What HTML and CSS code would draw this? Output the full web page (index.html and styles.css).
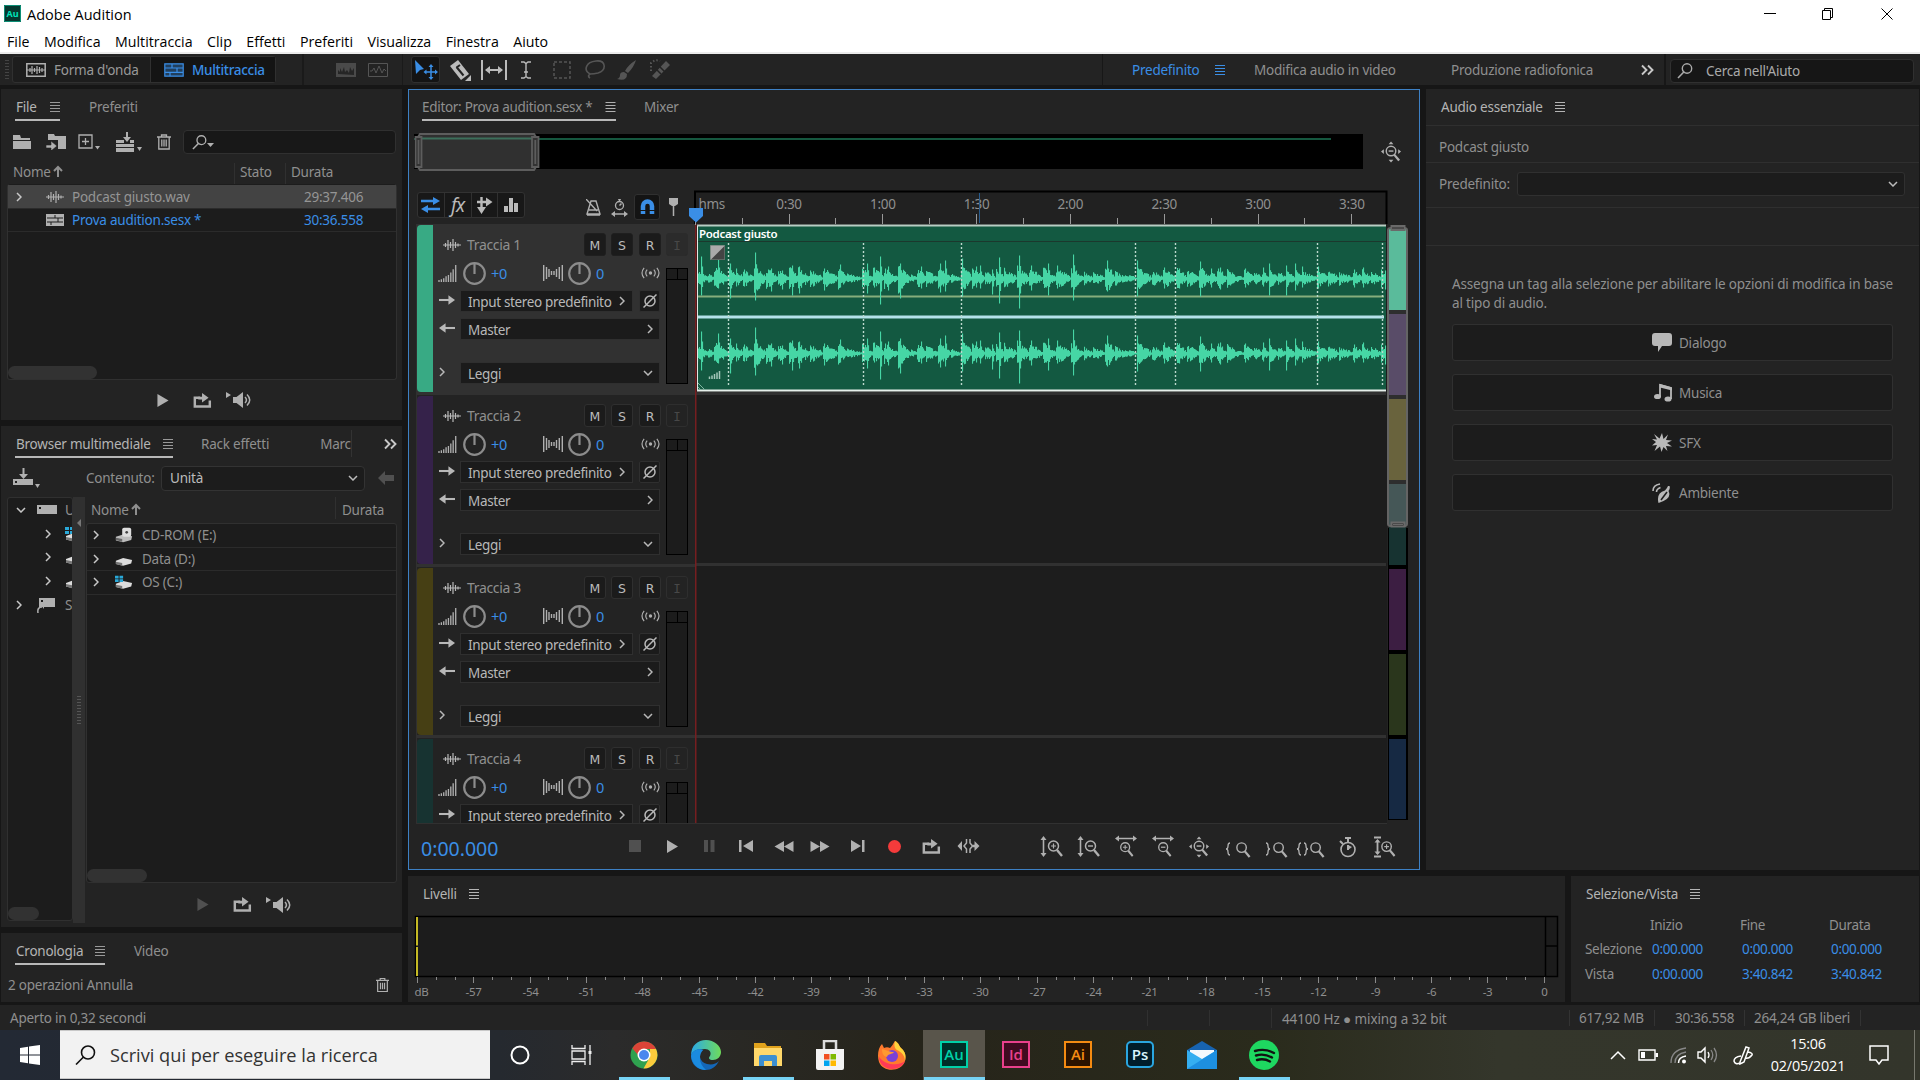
FILE: index.html
```html
<!DOCTYPE html>
<html lang="it">
<head>
<meta charset="utf-8">
<title>Adobe Audition</title>
<link rel="stylesheet" href="styles.css">
</head>
<body>
<svg class="defs" aria-hidden="true">
  <defs>
    <symbol id="menu" viewBox="0 0 10 10"><path d="M0 .5h10M0 3.5h10M0 6.5h10M0 9.5h10" stroke="currentColor"/></symbol>
    <symbol id="chev-r" viewBox="0 0 6 10"><path d="M1 1l4 4-4 4" fill="none" stroke="currentColor" stroke-width="1.5"/></symbol>
    <symbol id="chev-d" viewBox="0 0 10 6"><path d="M1 1l4 4 4-4" fill="none" stroke="currentColor" stroke-width="1.5"/></symbol>
    <symbol id="more" viewBox="0 0 14 12"><path d="M1 1.500l4.500 4.500L1 10.500M7 1.500l4.500 4.500L7 10.500" fill="none" stroke="currentColor" stroke-width="1.900"/></symbol>
    <symbol id="up" viewBox="0 0 10 12"><path d="M5 12V2M1 6l4-4 4 4" fill="none" stroke="currentColor" stroke-width="2"/></symbol>
    <symbol id="lens" viewBox="0 0 16 16"><circle cx="10" cy="5.5" r="4.7" fill="none" stroke="currentColor" stroke-width="1.4"/><path d="M6.8 9L1 15" stroke="currentColor" stroke-width="1.6"/></symbol>
    <symbol id="wave" viewBox="0 0 18 12"><path d="M0 6h18M2.5 4v4M5 1v10M7.5 3v6M10 0v12M12.500 3v6M15 4.500v3" stroke="currentColor" stroke-width="1.2"/></symbol>
    <symbol id="wavebox" viewBox="0 0 20 14"><path d="M.8.8h18.400v12.400H.8z" fill="none" stroke="currentColor" stroke-width="1.5"/><path d="M1 7h18M4 5v4M6 3v8M8.500 5v4M11 3v8M13.500 4v6M16 5v4" stroke="currentColor" stroke-width="1.2"/></symbol>
    <symbol id="multi" viewBox="0 0 20 14"><path d="M.8.8h18.400v12.400H.8zM1 5h18M1 9.300h18M8 1v4M13 5v4M6 9v4" fill="currentColor" fill-opacity=".35" stroke="currentColor" stroke-width="1.2"/></symbol>
    <symbol id="sess" viewBox="0 0 18 12"><path d="M0 0h18v12H0z" fill="currentColor"/><path d="M1 4h16M1 8h16M9 1v3M5 8v3M12 4v4" stroke="#1c1c1c"/></symbol>
    <symbol id="trash" viewBox="0 0 14 16"><path d="M0 3h14M4.500 3V1h5v2M1.800 3v12h10.400V3M4.800 5.500v7M7 5.500v7M9.200 5.500v7" fill="none" stroke="currentColor" stroke-width="1.3"/></symbol>
    <symbol id="play" viewBox="0 0 12 14"><path d="M0 0l12 7-12 7z" fill="currentColor"/></symbol>
    <symbol id="loop" viewBox="0 0 19 16"><path d="M7 5H1.300v9.400h16V8" fill="none" stroke="currentColor" stroke-width="2.600"/><path d="M9 0l7 5-7 5V7H5V4h4z" fill="currentColor"/></symbol>
    <symbol id="speak" viewBox="0 0 26 18"><path d="M0 1l5 3-5 3zM7 6h3.500L17 1v16l-6.500-5H7z" fill="currentColor"/><path d="M19 6q3 3 0 6M21 3.500q5.500 5.500 0 11" fill="none" stroke="currentColor" stroke-width="1.500"/></symbol>
    <symbol id="drive" viewBox="0 0 20 9"><path fill="currentColor" fill-rule="evenodd" d="M0 0h20v9H0zM2 2v2h2V2z"/></symbol>
    <symbol id="disk" viewBox="0 0 20 16"><path d="M1 10l8-3 10 2-1 4-9 2.500-8-2z" fill="#ddd"/><path d="M1 11l7 1.500v3L1 13.500z" fill="#777"/></symbol>
    <symbol id="cd" viewBox="0 0 20 16"><path d="M1 10l8-2.500 10 2-1 4-9 2.500-8-2z" fill="#bbb"/><path d="M1 11l7 1.500v3L1 13.500z" fill="#666"/><rect x="8" width="10" height="10" rx="2" fill="#ddd"/><circle cx="13" cy="5" r="1.500" fill="#444"/></symbol>
    <symbol id="osdisk" viewBox="0 0 20 16"><use href="#disk"/><path d="M0 1h4v3H0zM5 1h4v3H5zM0 5h4v3H0zM5 5h4v3H5z" fill="#29a8d8"/></symbol>
    <symbol id="mag" viewBox="0 0 16 18"><circle cx="6.500" cy="7" r="5" fill="none" stroke="currentColor" stroke-width="1.500"/><path d="M10 11l5 6" stroke="currentColor" stroke-width="2.400"/></symbol>
    <symbol id="zin" viewBox="0 0 16 18"><use href="#mag"/><path d="M4 7h5M6.500 4.500v5" stroke="currentColor" stroke-width="1.200"/></symbol>
    <symbol id="zout" viewBox="0 0 16 18"><use href="#mag"/><path d="M4 7h5" stroke="currentColor" stroke-width="1.400"/></symbol>
    <symbol id="zoomfull" viewBox="0 0 22 22"><circle cx="10.500" cy="10" r="5" fill="none" stroke="currentColor" stroke-width="1.500"/><path d="M8 10h5" stroke="currentColor" stroke-width="1.500"/><path d="M14 14l5 6" stroke="currentColor" stroke-width="2.400"/><path d="M10.500 0l2.500 3H8zM10.500 22l2.500-3H8zM0 10.500L3 8v5zM21 10.500L18 8v5z" fill="currentColor"/></symbol>
    <symbol id="a-right" viewBox="0 0 17 10"><path d="M0 5h11" stroke="currentColor" stroke-width="2.200"/><path d="M10 0l7 5-7 5z" fill="currentColor"/></symbol>
    <symbol id="a-left" viewBox="0 0 17 10"><path d="M6 5h11" stroke="currentColor" stroke-width="2.200"/><path d="M7 0L0 5l7 5z" fill="currentColor"/></symbol>
    <symbol id="bars" viewBox="0 0 20 18"><path d="M1 18v-2M3.500 18v-3M6 18v-4M8.500 18v-6M11 18v-7.500M13.500 18V8M16 18V4.500M18.700 18V0" stroke="currentColor" stroke-width="1.400"/></symbol>
    <symbol id="pan" viewBox="0 0 20 16"><path d="M.7 0v16M3.500 2v12M6 4v8M8.500 6v4M11 6v4M13.500 4v8M16.300 2v12M19.300 0v16" stroke="currentColor" stroke-width="1.400"/></symbol>
    <symbol id="knob" viewBox="0 0 23 23"><circle cx="11.500" cy="11.500" r="10.300" fill="none" stroke="#8c8c8c" stroke-width="2.200"/><path d="M11.500 2v10" stroke="#8c8c8c" stroke-width="2.200"/></symbol>
    <symbol id="monitor" viewBox="0 0 20 12"><circle cx="10" cy="6" r="1.800" fill="currentColor"/><path d="M6.500 2.500q-3 3.500 0 7M13.500 2.500q3 3.500 0 7M3.300 .5q-4.500 5.500 0 11M16.700 .5q4.500 5.500 0 11" fill="none" stroke="currentColor" stroke-width="1.200"/></symbol>
    <symbol id="phase" viewBox="0 0 14 14"><circle cx="7" cy="7" r="5" fill="none" stroke="currentColor" stroke-width="1.500"/><path d="M.5 13.500l13-13" stroke="currentColor" stroke-width="1.500"/></symbol>
  </defs>
</svg>

<header class="titlebar">
  <div class="caption">
    <svg class="app-ico" width="17" height="17" viewBox="0 0 17 17"><rect width="17" height="17" fill="#06382f"/><path d="M.5.5h16v16H.5z" fill="none" stroke="#0c8e76"/><text x="8.500" y="11.500" text-anchor="middle" font-size="9" font-weight="700" fill="#00e4bb">Au</text></svg>
    <span>Adobe Audition</span>
    <svg class="win-ctl" width="130" height="14" viewBox="0 0 130 14" fill="none" stroke="#000"><path d="M0 6.500h12M58.500 3.500h8v9h-8zM60.500 3V1.500h8v9h-2M117.500 1.500l11 11M128.500 1.500l-11 11"/></svg>
  </div>
  <nav class="menubar"><span>File</span><span>Modifica</span><span>Multitraccia</span><span>Clip</span><span>Effetti</span><span>Preferiti</span><span>Visualizza</span><span>Finestra</span><span>Aiuto</span></nav>
</header>

<div class="toolbar">
  <div class="grip"></div>
  <div class="modes">
    <div class="mode"><svg width="20" height="14"><use href="#wavebox"/></svg>Forma d'onda</div>
    <div class="mode on"><svg width="20" height="14"><use href="#multi"/></svg>Multitraccia</div>
  </div>
  <div class="dim-pair">
    <svg width="20" height="14" viewBox="0 0 20 14"><path d="M0 0h20v14H0z" fill="#4a4a4a"/><path d="M2 11V7l2 2V5l2 4 2-5 1 5 2-2 2 3 1-6 2 4 2-3v7z" fill="#262626"/></svg>
    <svg width="20" height="14" viewBox="0 0 20 14" fill="none" stroke="#555"><path d="M.5.5h19v13H.5zM2 8h2l2-3 2 5 3-7 3 7 2-4 2 2"/></svg>
  </div>
  <div class="tools">
    <div class="tool on"><svg width="24" height="22" viewBox="0 0 24 22"><path d="M1 1l9 9-4 1-4 4z" fill="#3a8ee6"/><path d="M17 7v12M11 13h12" stroke="#3a8ee6" stroke-width="1.500"/><path d="M17 5l2.500 3h-5zM17 21l2.500-3h-5zM9.500 13l3-2.500v5zM24 13l-3-2.500v5z" fill="#3a8ee6"/></svg></div>
    <svg width="24" height="22" viewBox="0 0 24 22"><path d="M1 7l8-6 11 14-8 6z" fill="#bbb"/><path d="M7.500 8l7 8.500M7.500 8.500l3.500-2.500" stroke="#232323" stroke-width="2"/><path d="M22 16v6h-6z" fill="#bbb"/></svg>
    <svg width="26" height="20" viewBox="0 0 26 20"><path d="M1 0v20M25 0v20M5 10h16" stroke="#bbb" stroke-width="2"/><path d="M4 10l5-4v8zM22 10l-5-4v8z" fill="#bbb"/></svg>
    <svg class="g0" width="12" height="18" viewBox="0 0 12 18"><path d="M1 1h3l2 1.500L8 1h3M1 17h3l2-1.500L8 17h3M6 2v14M4 11h4" fill="none" stroke="#bbb" stroke-width="1.400"/></svg>
    <svg class="g1" width="18" height="18" viewBox="0 0 18 18"><path d="M1 1h16v16H1z" fill="none" stroke="#555" stroke-width="1.500" stroke-dasharray="3 2"/></svg>
    <svg class="g2" width="21" height="19" viewBox="0 0 21 19"><path d="M5 14C-2 10 1 2 11 1s11 9 2 12c-4 1-6 1-8 1zm0 0q-3 2 0 4" fill="none" stroke="#555" stroke-width="1.600"/></svg>
    <svg class="g3" width="20" height="20" viewBox="0 0 20 20"><path d="M19 0Q11 5 8 11l3 2q6-6 8-13zM7 12q-4 0-4 3t-3 4q10 3 10-5z" fill="#555"/></svg>
    <svg class="g4" width="22" height="21" viewBox="0 0 22 21"><path d="M2 17L16 2l4 4L6 20z" fill="#555"/><path d="M9 7l6 6M7 11l4 4" stroke="#232323" stroke-width="1.500"/><path d="M1 12V4q4-4 9-2" fill="none" stroke="#555" stroke-dasharray="1.500 2" stroke-width="2"/></svg>
  </div>
  <div class="spaces">
    <span class="blue w1">Predefinito</span><svg class="blue" width="10" height="10"><use href="#menu"/></svg>
    <span class="w2">Modifica audio in video</span><span class="w3">Produzione radiofonica</span>
    <svg class="lite" width="14" height="12"><use href="#more"/></svg>
  </div>
  <div class="help"><svg width="16" height="16"><use href="#lens"/></svg>Cerca nell'Aiuto</div>
</div>

<main class="workspace">
  <div class="left">
    <section class="panel">
      <div class="tabs"><div class="tab on t45">File<svg width="10" height="10"><use href="#menu"/></svg></div><span class="tab2 m29">Preferiti</span></div>
      <div class="filebar">
        <svg width="18" height="14" viewBox="0 0 18 14"><path d="M0 0h7l1 3h9v2H0zM0 6h18v8H0z" fill="#b0b0b0"/></svg>
        <svg width="20" height="16" viewBox="0 0 20 16"><path d="M2 0h6l1 2h11v13h-8V6H2z" fill="#b0b0b0"/><path d="M0 11h5V7l6 5-6 5v-3H0z" fill="#b0b0b0" stroke="#232323" stroke-width=".6"/></svg>
        <svg width="22" height="16" viewBox="0 0 22 16"><path d="M1 1h13v13H1zM4 7.500h7M7.500 4v7" fill="none" stroke="#b0b0b0" stroke-width="1.300"/><path d="M17 12h5l-2.500 3.500z" fill="#b0b0b0"/></svg>
        <svg width="26" height="20" viewBox="0 0 26 20"><path d="M0 8h8v3H0zM14 8h4v3h-4zM0 12h18v3H0zM0 16h18v4H0z" fill="#b0b0b0"/><path d="M11 0v6" stroke="#b0b0b0" stroke-width="2"/><path d="M7 5h8l-4 5zM21 15h5l-2.500 4z" fill="#b0b0b0"/></svg>
        <svg width="14" height="16" class="ic"><use href="#trash"/></svg>
        <div class="search"><svg width="15" height="15" class="ic"><use href="#lens"/></svg><svg width="7" height="4" viewBox="0 0 7 4"><path d="M0 0h7L3.500 4z" fill="#b0b0b0"/></svg></div>
      </div>
      <div class="filehead"><span>Nome <svg width="10" height="12"><use href="#up"/></svg></span><span>Stato</span><span>Durata</span></div>
      <div class="filebox">
        <div class="frow sel"><svg width="6" height="10" class="lite"><use href="#chev-r"/></svg><svg width="18" height="12" class="ic"><use href="#wave"/></svg><span>Podcast giusto.wav</span><span>29:37.406</span></div>
        <div class="frow blue"><i></i><svg width="18" height="12" class="ic"><use href="#sess"/></svg><span>Prova audition.sesx *</span><span>30:36.558</span></div>
        <div class="thumb w89"></div>
      </div>
      <div class="mini"><svg width="12" height="13"><use href="#play"/></svg><svg width="19" height="15"><use href="#loop"/></svg><svg width="26" height="18"><use href="#speak"/></svg></div>
    </section>

    <section class="panel">
      <div class="tabs"><div class="tab on t158">Browser multimediale<svg width="10" height="10"><use href="#menu"/></svg></div><span class="tab2 m28">Rack effetti</span><span class="tab2 cut">Marca</span><svg class="lite far" width="14" height="12"><use href="#more"/></svg></div>
      <div class="mbar">
        <svg width="28" height="20" viewBox="0 0 28 20"><path d="M0 11h20v6H0z" fill="#b0b0b0"/><path d="M2 13h2v2H2z" fill="#232323"/><path d="M10.500 0v8" stroke="#b0b0b0" stroke-width="2"/><path d="M6 6h9l-4.500 5zM22 16h5l-2.500 4z" fill="#b0b0b0"/></svg>
        <span>Contenuto:</span><div class="select">Unità<svg width="10" height="6"><use href="#chev-d"/></svg></div>
        <svg width="16" height="14" viewBox="0 0 16 14"><path d="M7 0v4h9v6H7v4L0 7z" fill="#505050"/></svg>
      </div>
      <div class="mbody">
        <div class="tree">
          <div class="trow"><svg width="10" height="6" class="lite"><use href="#chev-d"/></svg><svg width="20" height="9" class="ic tc"><use href="#drive"/></svg><span>U</span></div>
          <div class="trow in"><svg width="6" height="10" class="lite"><use href="#chev-r"/></svg><svg width="20" height="16"><use href="#osdisk"/></svg></div>
          <div class="trow in"><svg width="6" height="10" class="lite"><use href="#chev-r"/></svg><svg width="20" height="16"><use href="#disk"/></svg></div>
          <div class="trow in"><svg width="6" height="10" class="lite"><use href="#chev-r"/></svg><svg width="20" height="16"><use href="#disk"/></svg></div>
          <div class="trow"><svg width="6" height="10" class="lite"><use href="#chev-r"/></svg><svg width="18" height="15" viewBox="0 0 18 15" class="tc"><path fill="#b0b0b0" fill-rule="evenodd" d="M2 0h16v9H2zM4 2v2h2V2z"/><path d="M1 15q-1-6 4-6" fill="none" stroke="#b0b0b0" stroke-width="1.500"/><path d="M3 6h4v5z" fill="#b0b0b0"/></svg><span>S</span></div>
          <div class="thumb w31"></div>
        </div>
        <div class="split"><svg width="4" height="8" viewBox="0 0 4 8"><path d="M4 0v8L0 4z" fill="#777"/></svg><b></b></div>
        <div class="mlist">
          <div class="mhead"><span>Nome <svg width="10" height="12"><use href="#up"/></svg></span><span>Durata</span></div>
          <div class="mbox">
            <div class="mrow"><svg width="6" height="10" class="lite"><use href="#chev-r"/></svg><svg width="18" height="16"><use href="#cd"/></svg>CD-ROM (E:)</div>
            <div class="mrow"><svg width="6" height="10" class="lite"><use href="#chev-r"/></svg><svg width="18" height="16"><use href="#disk"/></svg>Data (D:)</div>
            <div class="mrow"><svg width="6" height="10" class="lite"><use href="#chev-r"/></svg><svg width="18" height="16"><use href="#osdisk"/></svg>OS (C:)</div>
            <div class="thumb w60"></div>
          </div>
          <div class="mini second"><svg width="12" height="13"><use href="#play"/></svg><svg width="19" height="15"><use href="#loop"/></svg><svg width="26" height="18"><use href="#speak"/></svg></div>
        </div>
      </div>
    </section>

    <section class="panel">
      <div class="tabs"><div class="tab on t90">Cronologia<svg width="10" height="10"><use href="#menu"/></svg></div><span class="tab2 m29">Video</span></div>
      <div class="hist"><span>2 operazioni Annulla</span><svg width="13" height="16" class="ic"><use href="#trash"/></svg></div>
    </section>
  </div>

  <div class="right">
    <div class="upper">
      <section class="panel editor">
        <div class="tabs"><div class="tab t194">Editor: Prova audition.sesx *<svg width="11" height="10" class="ic"><use href="#menu"/></svg></div><span class="tab2 m28">Mixer</span></div>
        <div class="over">
          <div class="overview"><div class="clipline"></div>
            <svg class="range" width="126" height="38" viewBox="0 0 126 38"><path d="M5 2h115v34H5z" fill="#303030"/><path d="M4 5.500h118" stroke="#3c6f5b" stroke-width="2"/><path d="M4 4l2-3h114l2 3M4 34l2 3h114l2-3" fill="none" stroke="#5d5d5d" stroke-width="2"/><path d="M1.500 4h6v30h-6zM118 4h6.500v30H118zM4.500 7v24M121.300 7v24" fill="#333" stroke="#5d5d5d" stroke-width="1.800"/></svg>
          </div>
          <svg class="ic" width="21" height="22"><use href="#zoomfull"/></svg>
        </div>
        <div class="timeline">
          <div class="tracktools">
            <div class="group">
              <span class="cell"><svg width="19" height="16" viewBox="0 0 19 16"><path d="M0 4h13M6 12h13" stroke="#3a8ee6" stroke-width="2.400"/><path d="M12 0l7 4-7 4zM7 8l-7 4 7 4z" fill="#3a8ee6"/></svg></span>
              <span class="cell fx">fx</span>
              <span class="cell"><svg width="17" height="18" viewBox="0 0 17 18"><path d="M1 6h10M5.500 1v11" stroke="#bbb" stroke-width="2.400"/><path d="M10 1.500l6.500 4.500-6.500 4.500zM1 11h9l-4.500 7z" fill="#bbb"/></svg></span>
              <span class="cell"><svg width="14" height="14" viewBox="0 0 14 14"><path d="M0 8h4v6H0zM5 0h4v14H5zM10 5h4v9h-4z" fill="#bbb"/></svg></span>
            </div>
            <svg width="15" height="17" viewBox="0 0 15 17"><path d="M5 2h5l4 13H1zM3 11h9M0 0l11 12M1 16h13" fill="none" stroke="#b0b0b0" stroke-width="1.400"/></svg>
            <svg width="17" height="18" viewBox="0 0 17 18"><circle cx="8.500" cy="6.500" r="4" fill="none" stroke="#b0b0b0" stroke-width="1.300"/><path d="M7 0h3M8.500 0v3M8.500 6.500l2-2M2 15h13" stroke="#b0b0b0" stroke-width="1.500"/><path d="M0 15l4-3v6zM17 15l-4-3v6z" fill="#b0b0b0"/></svg>
            <span class="snap"><svg width="15" height="16" viewBox="0 0 15 16"><path d="M3 15V7a4.500 4.500 0 0 1 9 0v8" fill="none" stroke="#3a8ee6" stroke-width="4.500"/><path d="M0 11.500h6M9 11.500h6" stroke="#161616"/></svg></span>
            <svg width="9" height="18" viewBox="0 0 9 18"><path d="M0 0h9v6L6 8H3L0 6z" fill="#b0b0b0"/><path d="M4.500 8v10" stroke="#b0b0b0" stroke-width="1.500"/></svg>
          </div>
          <svg id="ruler" class="ruler" width="692" height="33" viewBox="695 191 692 33"></svg>
          <div></div>
          <div id="tracks" class="tracks"></div>
          <svg id="lanes" class="lanes" width="692" height="600" viewBox="695 224 692 600"></svg>
          <svg class="nav" width="32" height="600" viewBox="1387 224 32 600">
            <path d="M1388 528h20v292h-20z" fill="#000"/><path d="M1388 228h19v299h-19z" fill="#2e2e2e"/>
            <path d="M1389 229h17v81h-17z" fill="#5abb9b"/><path d="M1389 314h17v81h-17z" fill="#594c68"/><path d="M1389 399h17v81h-17z" fill="#69633d"/><path d="M1389 484h17v43h-17z" fill="#455757"/>
            <path d="M1389 527h17v38h-17z" fill="#173331"/><path d="M1389 569h17v81h-17z" fill="#3c1e42"/><path d="M1389 654h17v81h-17z" fill="#2a361c"/><path d="M1389 739h17v80h-17z" fill="#162943"/>
            <path d="M1388 230q0-2 3-2h13q3 0 3 2v294q0 2-3 2h-13q-3 0-3-2z" fill="none" stroke="#646464" stroke-width="2"/>
            <path d="M1391.500 226h13v4h-13zM1391.500 522.500h13v4h-13z" fill="#2a2a2a" stroke="#6a6a6a" stroke-width="2"/><path d="M1393 228h10M1393 524.500h10" stroke="#6a6a6a"/>
          </svg>
        </div>
        <div class="transport">
          <div class="clock">0:00.000</div>
          <svg width="780" height="36" viewBox="620 830 780 36" class="ic">
            <path d="M629 841h12v12h-12z" fill="#505050"/><path d="M667 841l11 6.500-11 6.500z" fill="currentColor"/><path d="M704 841h4v12h-4zM710.500 841h4v12h-4z" fill="#505050"/>
            <path d="M739 841h2.500v12H739zM753 841v12l-10-6z" fill="currentColor"/><path d="M784 842v11l-9.500-5.500zM793.500 842v11l-9.500-5.500z" fill="currentColor"/><path d="M810.500 842v11l9.500-5.500zM820 842v11l9.500-5.500z" fill="currentColor"/><path d="M862 841h2.500v12H862zM851 841v12l10-6z" fill="currentColor"/>
            <circle cx="894.500" cy="847.500" r="6.500" fill="#f43b3b"/>
            <svg x="922" y="840" width="19" height="15"><use href="#loop"/></svg>
            <path d="M966.500 840v4l-2.500 3 2.500 3v4M970 840v4l2.500 3-2.500 3v4" fill="none" stroke="currentColor" stroke-width="1.500"/><path d="M962 842v10l-4.500-5zM974.500 842v3.800h-2v2.400h2v3.800l5-5z" fill="currentColor"/>
            <svg x="1047" y="840" width="16" height="18"><use href="#zin"/></svg><svg x="1084" y="840" width="16" height="18"><use href="#zout"/></svg>
            <path d="M1043.500 840v15M1080.500 840v15" stroke="currentColor" stroke-width="1.600"/><path d="M1043.500 837l3 4h-6zM1043.500 858l3-4h-6zM1080.500 837l3 4h-6zM1080.500 858l3-4h-6z" fill="currentColor"/>
            <svg x="1119" y="842" width="15" height="16"><use href="#zin"/></svg><svg x="1157" y="842" width="15" height="16"><use href="#zout"/></svg>
            <path d="M1118 839.500h16M1155 839.500h16" stroke="currentColor" stroke-width="1.600"/><path d="M1115 839.500l4-3v6zM1137 839.500l-4-3v6zM1152 839.500l4-3v6zM1174 839.500l-4-3v6z" fill="currentColor"/>
            <svg x="1189" y="837" width="21" height="22"><use href="#zoomfull"/></svg>
            <svg x="1235" y="842" width="16" height="17"><use href="#mag"/></svg><svg x="1272" y="842" width="16" height="17"><use href="#mag"/></svg><svg x="1309" y="842" width="16" height="17"><use href="#mag"/></svg>
            <path d="M1230 844q-2 0-2 3t-2 3q2 0 2 3t2 3M1266 844q2 0 2 3t2 3q-2 0-2 3t-2 3M1301 844q-2 0-2 3t-2 3q2 0 2 3t2 3M1304 844q2 0 2 3t2 3q-2 0-2 3t-2 3" fill="none" stroke="currentColor" stroke-width="1.300"/>
            <circle cx="1348" cy="850.500" r="7" fill="none" stroke="currentColor" stroke-width="1.600"/><path d="M1345 839h6M1348 839v5M1348 851v-5M1340 842l3 3" stroke="currentColor" stroke-width="2"/><path d="M1348 851v-5l4 2z" fill="currentColor"/>
            <svg x="1380" y="841" width="16" height="17"><use href="#zin"/></svg><path d="M1374 838.500h7M1374 857.500h7M1377.500 841v14" stroke="currentColor" stroke-width="1.800"/><path d="M1377.500 840l3 3.500h-6zM1377.500 856l3-3.500h-6z" fill="currentColor"/>
          </svg>
        </div>
      </section>

      <section class="panel essential">
        <div class="tabs line"><div class="tab bare">Audio essenziale<svg width="10" height="10"><use href="#menu"/></svg></div></div>
        <div class="cliprow">Podcast giusto</div>
        <div class="preset"><span>Predefinito:</span><div class="drop"><svg width="10" height="6"><use href="#chev-d"/></svg></div></div>
        <div class="blank"></div>
        <div class="assign">
          <p>Assegna un tag alla selezione per abilitare le opzioni di modifica in base al tipo di audio.</p>
          <div class="tag"><svg width="20" height="19" viewBox="0 0 20 19"><path d="M3 0h14q3 0 3 3v7q0 3-3 3h-7l-4 6v-6H3q-3 0-3-3V3q0-3 3-3z" fill="#b8b8b8"/></svg>Dialogo</div>
          <div class="tag"><svg width="20" height="19" viewBox="0 0 20 19"><path d="M8 14V2l11 3v11" fill="none" stroke="#b8b8b8" stroke-width="1.800"/><path d="M8 1l12 3.500v3L8 4.500z" fill="#b8b8b8"/><ellipse cx="5.500" cy="13.500" rx="3.500" ry="2.600" fill="#b8b8b8"/><ellipse cx="16" cy="16" rx="3.500" ry="2.600" fill="#b8b8b8"/></svg>Musica</div>
          <div class="tag"><svg width="20" height="19" viewBox="0 0 20 19"><path d="M10 0l1.500 6L16 1.500l-2 5.500 6 .5-5 2.500 5 3.500-6-.5 1.500 5-4-4L9.500 19 8 13.500 2.500 18l2.500-6-5 .5L4 9 0 6l5 .5L2 1l5.500 4.500z" fill="#b8b8b8"/></svg>SFX</div>
          <div class="tag"><svg width="20" height="20" viewBox="0 0 20 20"><path d="M17.500 3q1 2-1 5 4 8-10 12Q4 10 13 7.500q2-2 3-4.500z" fill="#b8b8b8"/><path d="M9 17l6-8" stroke="#1c1c1c" stroke-width="1.500"/><path d="M1 8q0-6 7-7M4.500 9q0-3 4-4.500" fill="none" stroke="#b8b8b8" stroke-width="1.600"/></svg>Ambiente</div>
        </div>
      </section>
    </div>

    <div class="lower">
      <section class="panel">
        <div class="tabs"><div class="tab bare lv">Livelli<svg width="10" height="10"><use href="#menu"/></svg></div></div>
        <svg id="levels" class="levels" width="1157" height="94" viewBox="408 908 1157 94"></svg>
      </section>
      <section class="panel">
        <div class="tabs"><div class="tab bare sv">Selezione/Vista<svg width="10" height="10"><use href="#menu"/></svg></div></div>
        <div class="selgrid">
          <span></span><em>Inizio</em><em>Fine</em><em>Durata</em>
          <span>Selezione</span><b>0:00.000</b><b>0:00.000</b><b>0:00.000</b>
          <span>Vista</span><b>0:00.000</b><b>3:40.842</b><b>3:40.842</b>
        </div>
      </section>
    </div>
  </div>
</main>

<footer class="status">
  <span class="s0">Aperto in 0,32 secondi</span><span class="sep a"></span><span class="sep b"></span><span class="s1">44100 Hz ● mixing a 32 bit</span>
  <span class="s2">617,92 MB</span><span class="s3">30:36.558</span><span class="s4">264,24 GB liberi</span>
</footer>

<div class="taskbar">
  <div class="start"><svg width="20" height="20" viewBox="0 0 20 20"><path d="M0 3l8-1.200V9.500H0zM9 1.600L20 0v9.500H9zM0 10.500h8v7.800L0 17zM9 10.500h11V20L9 18.400z" fill="#fff"/></svg></div>
  <div class="winsearch"><svg width="21" height="20" viewBox="0 0 21 20"><circle cx="13" cy="7.500" r="6.500" fill="none" stroke="#111" stroke-width="1.600"/><path d="M8.500 12L1 19.500" stroke="#111" stroke-width="1.600"/></svg>Scrivi qui per eseguire la ricerca</div>
  <div class="apps">
    <div class="app"><svg width="22" height="22" viewBox="0 0 22 22"><circle cx="11" cy="11" r="8.500" fill="none" stroke="#fff" stroke-width="2"/></svg></div>
    <div class="app"><svg width="22" height="20" viewBox="0 0 22 20" fill="none" stroke="#eee" stroke-width="1.300"><path d="M1 0v3.500h13V0M1 20v-3.500h13V20M1 6h13v8H1zM19 0v20"/><path d="M17.500 7.500h3" stroke-width="3"/></svg></div>
    <div class="app run"><svg width="28" height="28" viewBox="0 0 28 28"><circle cx="14" cy="14" r="13.500" fill="#2fa14f"/><path d="M2.300 7.300A13.500 13.500 0 0 1 26 8H14l-6 6z" fill="#db4437"/><path d="M26 8a13.500 13.500 0 0 1-12.500 19.500L20 16V8z" fill="#fbcb3c"/><circle cx="14" cy="14" r="6.500" fill="#fff"/><circle cx="14" cy="14" r="5" fill="#4a87ee"/></svg></div>
    <div class="app"><svg width="30" height="30" viewBox="0 0 30 30"><defs><linearGradient id="eg"><stop offset="0" stop-color="#2aa8e8"/><stop offset="1" stop-color="#6fdc5a"/></linearGradient></defs><path d="M0 16C0 5 7 0 15 0s15 6 15 12c0 5-4 8-8 8-4 0-5-2-3-4 2-4-1-7-5-7C8 9 1 12 0 16z" fill="url(#eg)"/><path d="M0 16C1 10 8 8 12 10c-5 3-4 12 4 14 5 1 9 0 12-3-3 6-8 9-13 9C6 30 0 24 0 16z" fill="#1467b8"/><path d="M12 10c-4 4-5 13 3 20C7 30 1 24 0 16c1-5 8-8 12-6z" fill="#1b8be0"/></svg></div>
    <div class="app run"><svg width="28" height="24" viewBox="0 0 28 24"><path d="M0 0h11l2 3h14v20H0z" fill="#e0a21c"/><path d="M0 5h28v18H0z" fill="#ffd86b"/><path d="M5 23v-9q0-2 2-2h14q2 0 2 2v9h-5v-5h-8v5z" fill="#3d8fd1"/></svg></div>
    <div class="app"><svg width="28" height="30" viewBox="0 0 28 30"><path d="M8 9V1h12v8" fill="none" stroke="#ddd" stroke-width="2.500"/><path d="M0 9h28v19q0 2-2 2H2q-2 0-2-2z" fill="#f3f3f3"/><path d="M8 14h5.500v5.500H8z" fill="#f25022"/><path d="M14.500 14H20v5.500h-5.500z" fill="#7fba00"/><path d="M8 20.500h5.500V26H8z" fill="#00a4ef"/><path d="M14.500 20.500H20V26h-5.500z" fill="#ffb900"/></svg></div>
    <div class="app"><svg width="30" height="30" viewBox="0 0 30 30"><path d="M18 1c4 2 4 5 6 7 5 4 5 9 4 13-3 11-22 12-26 1C0 16 1 8 5 4l2 4c2-1 4-1 6 0 2-2 3-4 5-7z" fill="#ff7a2e"/><path d="M18 1c4 2 4 5 6 7 5 4 5 9 4 13 0-6-4-9-8-11-3-2-3-6-2-9z" fill="#ffd43c"/><path d="M2 17c0 8 7 12 13 12s11-3 13-8c-4 4-18 6-26-4z" fill="#ff3a57"/><circle cx="15" cy="16" r="6" fill="#7b41d6"/><path d="M5 9c5 1 7 3 12 3-2 3-6 1-7 5-4-1-5-4-5-8z" fill="#ff9a30"/></svg></div>
    <div class="app active"><div class="adobe au">Au</div></div>
    <div class="app"><div class="adobe id">Id</div></div>
    <div class="app"><div class="adobe ai">Ai</div></div>
    <div class="app"><div class="adobe ps">Ps</div></div>
    <div class="app"><svg width="30" height="28" viewBox="0 0 30 28"><path d="M0 9L15 0l15 9v4H0z" fill="#1763b0"/><path d="M3 9h24v9H3z" fill="#f4f9fd"/><path d="M0 9l15 9L30 9v19H0z" fill="#35aef0"/><path d="M0 28l30-19v19z" fill="#1d8fe0"/></svg></div>
    <div class="app run"><svg width="30" height="30" viewBox="0 0 30 30"><circle cx="15" cy="15" r="15" fill="#1ed760"/><path d="M6 11q10-3 19 2M7 15.500q8-2.500 16 2M8 20q7-2 13 1.500" fill="none" stroke="#111" stroke-width="2.400" stroke-linecap="round"/></svg></div>
  </div>
  <div class="tray">
    <svg width="16" height="10" viewBox="0 0 16 10"><path d="M1 9l7-7 7 7" fill="none" stroke="#fff" stroke-width="1.500"/></svg>
    <svg width="20" height="12" viewBox="0 0 20 12"><path d="M1 1h16v10H1z" fill="none" stroke="#fff" stroke-width="1.400"/><path d="M3 3h4v6H3zM17.500 4H20v4h-2.500z" fill="#fff"/></svg>
    <svg width="17" height="17" viewBox="0 0 17 17" fill="none"><path d="M1 16Q1 3 16 1M5 16Q5 7 16 5" stroke="#888" stroke-width="1.300"/><path d="M8.500 16q0-6 7.500-7" stroke="#fff" stroke-width="1.500"/><circle cx="14" cy="14.500" r="2" fill="#fff"/></svg>
    <svg width="22" height="18" viewBox="0 0 22 18" fill="none"><path d="M1 6h3l4-4v14l-4-4H1z" stroke="#fff" stroke-width="1.400"/><path d="M11 6q2 3 0 6" stroke="#fff" stroke-width="1.300"/><path d="M14 4q3.500 5 0 10M17 2q5 7 0 14" stroke="#888" stroke-width="1.300"/></svg>
    <svg width="20" height="19" viewBox="0 0 20 19" fill="none" stroke="#fff" stroke-width="1.500"><path d="M7 16L13 1l3 1-5 14-4 2zM8 10q-7 1-7 5 1 4 6 2M15 6q5 1 4 3-3 4-7 3"/></svg>
    <div class="when"><span>15:06</span><span>02/05/2021</span></div>
    <svg width="20" height="20" viewBox="0 0 20 20"><path d="M1 1h18v14h-6l-3 4-3-4H1z" fill="none" stroke="#fff" stroke-width="1.500"/></svg>
    <i></i>
  </div>
</div>
<script src="app.js"></script>
</body>
</html>
```
FILE: styles.css
```css
* { box-sizing: border-box; }
body { margin: 0; width: 1920px; height: 1080px; overflow: hidden; display: flex; flex-direction: column; background: #161616; color: #8f8f8f; font: 13.5px/18px "Noto Sans", "Open Sans", sans-serif; letter-spacing: -.23px; white-space: nowrap; }
svg { display: block; flex: none; }
.defs { position: absolute; width: 0; height: 0; }
.blue { color: #3a8ee6; }
.ic { color: #b0b0b0; }
.lite { color: #c8c8c8; }

.titlebar { height: 54px; background: #fff; border-bottom: 2px solid #ececec; color: #000; font: 14.200px/20px "Open Sans", sans-serif; letter-spacing: 0; }
.caption { display: flex; align-items: center; height: 29px; padding: 0 26px 2px 4px; gap: 6px; font-size: 14.500px; }
.caption span { padding-top: 2px; }
.win-ctl { margin-left: auto; }
.menubar { display: flex; height: 24px; align-items: center; gap: 14.500px; padding: 1px 0 0 7px; }

.toolbar { height: 31px; flex: none; background: #232323; display: flex; align-items: center; }
.grip { width: 4px; height: 20px; margin: 0 3px 0 5px; background: repeating-linear-gradient(#444 0 1px, #232323 1px 3px); }
.modes { display: flex; width: 264px; height: 27px; border: 1px solid #303030; border-radius: 3px; background: #1d1d1d; }
.mode { display: flex; align-items: center; gap: 8px; padding-left: 13px; width: 137px; color: #999; }
.mode svg { color: #b0b0b0; }
.mode.on { flex: 1; width: auto; background: #141414; border-left: 1px solid #303030; color: #3a8ee6; font-weight: 500; letter-spacing: -.3px; }
.mode.on svg { color: #3a8ee6; }
.dim-pair { display: flex; gap: 12px; align-items: center; height: 31px; width: 101px; margin-left: 26px; padding-left: 32px; border-left: 2px solid #1a1a1a; border-right: 1px solid #1a1a1a; }
.tools { display: flex; align-items: center; margin-left: 8px; width: 692px; height: 31px; border-right: 1px solid #171717; gap: 9px; }
.tool { display: grid; place-items: center; width: 29px; height: 27px; background: #141414; border: 1px solid #303030; border-radius: 3px; }
.tools svg:nth-child(3) { margin-left: -1px; }
.g0 { margin-left: 4px; } .g1 { margin-left: 12px; } .g2 { margin-left: 5px; } .g3 { margin-left: 2px; } .g4 { margin-left: 4px; }
.spaces { display: flex; align-items: center; height: 31px; width: 563px; padding-left: 29px; border-right: 2px solid #171717; }
.w1 { width: 83px; } .w2 { margin-left: 29px; width: 197px; } .w3 { width: 190px; }
.help { display: flex; align-items: center; gap: 13px; margin: 2px 0 0 4px; width: 244px; height: 24px; padding-left: 6px; background: #161616; border: 1px solid #303030; border-radius: 4px; color: #aaa; }

.workspace { height: 920px; flex: none; padding: 4px 1px 3px; display: grid; grid-template-columns: 401px 1fr; gap: 6px; }
.left { display: grid; grid-template-rows: 331px 501px 69px; gap: 6px; }
.right { display: grid; grid-template-rows: 781px 126px; gap: 6px; }
.upper { display: grid; grid-template-columns: 1012px 1fr; gap: 6px; }
.lower { display: grid; grid-template-columns: 1157px 1fr; gap: 6px; }
.panel { background: #232323; min-width: 0; overflow: hidden; }
.tabs { display: flex; height: 32px; padding-left: 14px; }
.tab { display: flex; justify-content: space-between; align-items: center; padding: 6px 0 0 1px; border-bottom: 2px solid #b8b8b8; }
.tab.on { color: #b4b4b4; } .tab.on svg { color: #999; }
.t45 { width: 45px; } .t158 { width: 158px; } .t90 { width: 90px; } .t194 { width: 194px; letter-spacing: -.3px; }
.tab2 { padding-top: 9px; } .m29 { margin-left: 29px; } .m28 { margin-left: 28px; }
.cut { margin: 4px 0 0 51px; padding-top: 5px; width: 32px; height: 27px; overflow: hidden; border-right: 1px solid #333; }
.far { margin: 12px 0 0 32px; }
.bare { border: 0; color: #b4b4b4; padding: 6px 0 2px 1px; justify-content: flex-start; gap: 12px; }

.filebar { display: flex; align-items: center; height: 42px; padding-left: 12px; }
.filebar > svg:nth-child(1) { margin-right: 15px; } .filebar > svg:nth-child(2) { margin-right: 12px; } .filebar > svg:nth-child(3) { margin-right: 16px; } .filebar > svg:nth-child(4) { margin-right: 15px; }
.search { display: flex; align-items: center; gap: 0; width: 213px; height: 24px; margin-left: 12px; padding-left: 8px; background: #181818; border: 1px solid #303030; border-radius: 4px; }
.search svg + svg { margin-top: 6px; }
.filehead { display: grid; grid-template-columns: 221px 51px 1fr; height: 21px; line-height: 19px; padding-left: 12px; }
.filehead svg, .mhead svg { display: inline; margin-left: -1px; }
.filehead span + span { border-left: 1px solid #303030; padding-left: 5px; }
.filebox { margin-left: 6px; width: 390px; height: 196px; background: #1c1c1c; border: 1px solid #303030; border-top: 0; border-radius: 3px; display: flex; flex-direction: column; }
.frow { display: grid; grid-template-columns: 30px 26px 232px 1fr; align-items: center; height: 23px; border-bottom: 1px solid #2b2b2b; padding-left: 8px; }
.sel { background: #434343; margin-top: 1px; height: 24px; color: #959595; }
.thumb { height: 13px; border-radius: 7px; background: #323232; margin-top: auto; flex: none; }
.w89 { width: 89px; } .w31 { width: 31px; } .w60 { width: 60px; }
.mini { display: flex; align-items: center; height: 40px; padding-left: 156px; gap: 24px; color: #b0b0b0; }
.mini svg:nth-child(3) { margin-left: -10px; }

.mbar { display: grid; grid-template-columns: 73px 75px 204px 13px 16px; align-items: center; height: 39px; padding: 1px 0 0 12px; }
.select { display: flex; justify-content: space-between; align-items: center; height: 25px; padding: 0 6px 0 8px; background: #1c1c1c; border: 1px solid #333; border-radius: 4px; color: #bbb; }
.mbar > svg:last-child { grid-column: 5; }
.mbody { display: grid; grid-template-columns: 66px 12px 312px; padding-left: 6px; height: 430px; }
.tree { height: 424px; background: #1c1c1c; border: 1px solid #303030; border-radius: 3px; overflow: hidden; display: flex; flex-direction: column; }
.trow { display: grid; grid-template-columns: 21px 28px 60px; align-items: center; height: 23.800px; padding-left: 8px; flex: none; }
.trow.in { grid-template-columns: 20px 20px; padding-left: 37px; }
.split { background: #303030; height: 426px; padding: 22px 0 0 4px; }
.split b { display: block; width: 4px; height: 28px; margin-top: 169px; background: repeating-linear-gradient(#555 0 1px, #303030 1px 3px); }
.mlist { padding-left: 1px; }
.mhead { display: grid; grid-template-columns: 244px 1fr; height: 26px; line-height: 26px; padding-left: 5px; }
.mhead span + span { border-left: 1px solid #303030; padding-left: 6px; height: 22px; }
.mbox { height: 360px; background: #1c1c1c; border: 1px solid #303030; border-radius: 3px; display: flex; flex-direction: column; }
.mrow { display: grid; grid-template-columns: 22px 27px 1fr; align-items: center; height: 23.600px; border-bottom: 1px solid #2b2b2b; padding-left: 6px; flex: none; }
.second { padding-left: 111px; height: 43px; }
.second svg:first-child { color: #505050; }
.hist { display: flex; align-items: center; justify-content: space-between; padding: 3px 13px 0 7px; height: 37px; }

.editor { border: 1px solid #3d80c4; }
.editor .tabs { height: 31px; padding-left: 13px; }
.editor .tab { padding: 5px 0 0; } .editor .tab2 { padding-top: 8px; }
.over { display: flex; height: 54px; padding: 13px 0 0 5px; gap: 18px; }
.over > .ic { margin-top: 7px; }
.overview { position: relative; width: 949px; height: 35px; background: #000; }
.clipline { height: 2px; width: 917px; margin-top: 0; background: #15573f; transform: translateY(4px); }
.range { position: absolute; left: 0; top: -1px; }
.timeline { display: grid; grid-template-columns: 286px 692px 32px; grid-template-rows: 33px 600px; margin-top: 16px; }
.tracktools { display: flex; align-items: center; padding: 0 0 6px 8px; }
.group { display: flex; width: 108px; height: 26px; background: #181818; border: 1px solid #323232; border-radius: 3px; margin-right: 61px; }
.cell { flex: 1; display: grid; place-items: center; color: #bbb; }
.cell + .cell { border-left: 1px solid #303030; }
.fx { font: italic 19px/22px "Noto Sans", sans-serif; letter-spacing: -1px; }
.tracktools > svg { margin: 6px 10px 0 0; color: #b0b0b0; }
.tracktools > svg:last-child { margin: 4px 0 0 9px; }
.snap { display: grid; place-items: center; width: 26px; height: 26px; margin: 4px 0 0 -4px; background: #141414; border: 1px solid #303030; border-radius: 3px; }
.ruler { overflow: visible; z-index: 2; }
.ruler, .lanes, .levels { font-family: "Noto Sans", sans-serif; letter-spacing: -.3px; }
.tracks { margin-left: 7px; display: grid; grid-template-rows: 171px 172px 171px 171px; height: 600px; overflow: hidden; border-left: 1px solid #303030; border-bottom: 1px solid #303030; }
.track { display: grid; grid-template-columns: 16px 229px 1fr; border-bottom: 3px solid #313131; }
.track.sel-t { background: #313131; }
.strip { border-radius: 4px 0 0 4px; margin-top: 1px; }
.main { padding-top: 9px; color: #b8b8b8; letter-spacing: -.34px; }
.r1 { display: grid; grid-template-columns: 24px 117px 27px 28px 22px; align-items: center; height: 22px; padding-left: 10px; }
.r1 .nm { color: #8f8f8f; font-size: 14px; }
.btn { display: grid; place-items: center; width: 22px; height: 23px; background: #1b1b1b; border: 1px solid #2f2f2f; border-radius: 3px; font: 12.500px/20px "DejaVu Sans", sans-serif; letter-spacing: 0; color: #bbb; padding-top: 2px; }
.btn.off { color: #484848; background: none; border-color: #2e2e2e; font-family: "DejaVu Sans Mono", monospace; }
.sel-t .btn { border-color: #1f1f1f; }
.sel-t .btn.off { background: #2b2b2b; border-color: #2b2b2b; }
.r2 { display: grid; grid-template-columns: 25px 28px 52px 25px 28px 45px 20px; align-items: center; height: 24px; margin-top: 6px; padding-left: 5px; color: #b0b0b0; }
.r2 span { color: #3a8ee6; font-size: 14.500px; }
.r3 { display: grid; grid-template-columns: 21px 173px 6px 21px; align-items: center; margin-top: 5px; padding-left: 6px; height: 21px; }
.r4 { display: grid; grid-template-columns: 21px 200px; align-items: center; margin-top: 7px; padding-left: 6px; height: 21px; }
.r3 > svg, .r4 > svg { margin-bottom: 2px; }
.r5 { margin-top: 23px; }
.field { display: flex; justify-content: space-between; align-items: center; height: 22px; padding: 1px 6px 0 7px; background: #1b1b1b; border: 1px solid #2f2f2f; }
.field svg { margin: 0 1px 2px 0; }
.r4 .field svg { margin-right: 0; }
.ph { grid-column: 4; display: grid; place-items: center; height: 22px; background: #1b1b1b; border: 1px solid #2f2f2f; border-radius: 2px; }
.side { padding: 9px 0 0 4px; }
.meter { margin-top: 12px; width: 22px; height: 116px; background: #1c1c1c; border: 1px solid #000; }
.meter i { display: block; height: 11px; border-bottom: 1px solid #000; background: linear-gradient(90deg, transparent 10px, #000 10px 11px, transparent 11px); }
.transport { display: flex; align-items: center; height: 45px; padding-left: 12px; }
.clock { width: 199px; font-size: 19.500px; color: #3a8ee6; padding-top: 4px; letter-spacing: 0; }

.line { height: 36px; padding-bottom: 4px; border-bottom: 0; box-shadow: 0 1px #2f2f2f; }
.cliprow { height: 38px; padding: 13px 0 0 13px; border-bottom: 1px solid #2f2f2f; }
.preset { display: grid; grid-template-columns: 78px 388px; align-items: center; height: 45px; padding: 0 0 3px 13px; border-bottom: 1px solid #2f2f2f; }
.drop { display: flex; align-items: center; justify-content: flex-end; height: 24px; padding-right: 6px; background: #1c1c1c; border: 1px solid #303030; border-radius: 3px; color: #bbb; }
.blank { height: 38px; border-bottom: 1px solid #2f2f2f; }
.assign { padding: 29px 26px 0; display: grid; gap: 13px; }
.assign p { margin: 0 0 -2px; line-height: 19px; white-space: normal; letter-spacing: -.16px; }
.tag { display: flex; align-items: center; gap: 7px; height: 37px; padding-left: 199px; background: #1c1c1c; border: 1px solid #303030; border-radius: 3px; }

.selgrid { display: grid; grid-template-columns: 67px 90px 89px 80px; grid-template-rows: 23px 25px 26px; align-items: center; padding: 5px 0 0 14px; letter-spacing: -.32px; }
.selgrid em { font-style: normal; margin-left: -2px; }
.selgrid b { font-weight: 400; color: #3a8ee6; }

.status { height: 25px; flex: none; background: #232323; display: flex; align-items: center; padding: 1px 0 0 10px; }
.s0 { width: 1137px; } .sep { height: 16px; border-left: 1px solid #303030; width: 62px; }
.s1 { width: 298px; padding-left: 10px; border-left: 1px solid #303030; padding-top: 2px; letter-spacing: -.1px; }
.s2, .s3, .s4 { border-left: 1px solid #333; line-height: 16px; height: 16px; }
.s2 { width: 85px; padding-left: 9px; } .s3 { width: 90px; padding-left: 20px; } .s4 { width: 117px; padding-left: 9px; border-right: 1px solid #333; }

.taskbar { height: 50px; flex: none; display: flex; background: linear-gradient(90deg, #232934 0, #25292f 26%, #2b2b2b 32%, #26241a 48%, #2a2b1c 66%, #34362b 78%, #33352b 100%); font-family: "Open Sans", sans-serif; letter-spacing: 0; }
.start { width: 60px; display: grid; place-items: center; }
.winsearch { width: 430px; height: 49px; background: #f2f2f2; border: 1px solid #c8c8c8; border-width: 1px 0; color: #333; display: flex; align-items: center; gap: 14px; padding-left: 15px; font-size: 18.200px; line-height: 24px; }
.apps { display: flex; }
.app { width: 62px; height: 50px; display: grid; place-items: center; }
.app:first-child { width: 60px; }
.app:nth-child(2) { width: 63px; }
.run { background: linear-gradient(#76d3f5, #76d3f5) center bottom / 51px 3px no-repeat; }
.active { background: linear-gradient(#76d3f5, #76d3f5) center bottom / 61px 3px no-repeat, #59554b; }
.adobe { width: 28px; height: 27px; display: grid; place-items: center; border: 2px solid; font-size: 15px; font-weight: 600; line-height: 20px; margin-top: -2px; }
.au { color: #00d0a8; background: #002e28; } .id { color: #e9408c; background: #3f0b20; } .ai { color: #f58b12; background: #2b1300; } .ps { color: #d8f4ff; background: #001d2b; border-color: #2aa6e0; border-radius: 5px; }
.tray { margin-left: auto; display: flex; align-items: center; color: #fff; }
.tray > svg { margin-right: 12px; }
.tray > svg:nth-child(3) { margin-right: 10px; }
.tray > svg:nth-child(4) { margin-right: 14px; }
.when { width: 84px; margin: 0 19px 0 1px; display: grid; line-height: 22px; text-align: center; font-size: 14.400px; letter-spacing: -.2px; }
.tray > i { width: 6px; height: 50px; margin-left: 13px; border-left: 1px solid #77786e; }
```
FILE: app.js
```
const use = (id, w, h) => `<svg width="${w}" height="${h}"><use href="#${id}"/></svg>`;

// Track headers; the last one has room only for its first three rows
const colors = ["#38aa84", "#35224a", "#463f14", "#173331"];
document.getElementById("tracks").innerHTML = colors.map((c, i) => `
  <div class="track${i === 0 ? " sel-t" : ""}">
    <div class="strip" style="background:${c}"></div>
    <div class="main">
      <div class="r1">${use("wave", 18, 12)}<span class="nm">Traccia ${i + 1}</span><span class="btn">M</span><span class="btn">S</span><span class="btn">R</span></div>
      <div class="r2">${use("bars", 19, 17)}${use("knob", 23, 23)}<span>+0</span>${use("pan", 20, 16)}${use("knob", 23, 23)}<span>0</span>${use("monitor", 19, 12)}</div>
      <div class="r3">${use("a-right", 16, 10)}<div class="field">Input stereo predefinito${use("chev-r", 6, 10)}</div><div class="ph">${use("phase", 14, 14)}</div></div>
      ${i === 3 ? "" : `<div class="r4">${use("a-left", 16, 10)}<div class="field">Master${use("chev-r", 6, 10)}</div></div>
      <div class="r4 r5">${use("chev-r", 6, 10)}<div class="field">Leggi${use("chev-d", 10, 6)}</div></div>`}
    </div>
    <div class="side"><span class="btn off">I</span><div class="meter"><i></i></div></div>
  </div>`).join("");

// Time ruler
const step = 93.8;
let r = `<path d="M695 224V191.500H1386.500V224" fill="#212121" stroke="#000" stroke-width="2"/>`;
r += `<text x="698.500" y="209" font-size="13.500" fill="#8f8f8f">hms</text>`;
["0:30", "1:00", "1:30", "2:00", "2:30", "3:00", "3:30"].forEach((t, i) => {
  const x = 788.500 + i * step;
  r += `<text x="${x + .5}" y="209" font-size="13.500" fill="#8f8f8f" text-anchor="middle">${t}</text>`;
  r += `<path d="M${Math.round(x) + .5} 214v10" stroke="#999"/>`;
});
for (let i = 0; i < 7; i++) r += `<path d="M${Math.round(741.600 + i * step) + .5} 218v6" stroke="#999"/>`;
r += `<path d="M979.500 193v30" stroke="#285b8c"/><path d="M695.500 218v7" stroke="#999"/>`;
r += `<path d="M689 208h14v8l-7 6.500-7-6.500z" fill="#3a8ee6"/>`;
document.getElementById("ruler").innerHTML = r;

// Waveform: spikes as [x, rise, fall], phrases as [x, amplitude]
const spikes = [[701,22,17],[718,20,10],[730,15,20],[736,10,8],[744,9,8],[755,26,22],[771,10,13],[782,8,11],[792,13,17],[799,12,15],[824,10,12],[840,14,9],[867,15,15],[874,11,9],[880,22,26],[888,12,12],[900,15,20],[921,12,10],[940,15,14],[945,18,13],[962,20,18],[976,12,9],[980,13,10],[992,9,16],[999,21,25],[1019,23,30],[1031,13,12],[1048,15,17],[1057,13,10],[1073,24,22],[1107,18,13],[1137,18,18],[1164,11,10],[1179,10,10],[1200,17,18],[1211,10,9],[1220,11,11],[1245,10,9],[1263,11,8],[1269,15,17],[1286,13,17],[1295,15,12],[1302,12,9],[1318,12,10],[1354,9,9],[1363,11,9],[1381,9,9],[1385,8,11]];
const phrases = [[697,7],[708,4],[714,10],[729,9],[737,7],[743,8],[754,13],[766,9],[778,7],[789,12],[798,10],[810,8],[823,9],[838,10],[847,4],[862,9],[873,10],[884,9],[898,13],[911,3],[917,9],[926,7],[938,11],[951,4],[961,13],[972,9],[985,6],[996,10],[1004,9],[1017,11],[1029,9],[1043,10],[1056,9],[1071,10],[1084,6],[1093,6],[1105,15],[1115,7],[1122,4],[1137,10],[1152,7],[1163,9],[1176,10],[1187,8],[1199,12],[1210,7],[1217,10],[1227,8],[1237,3],[1244,8],[1254,6],[1262,7],[1269,9],[1278,6],[1286,7],[1295,7],[1303,6],[1317,9],[1328,7],[1339,6],[1353,8],[1362,9],[1371,6],[1381,7]];
let seed = 7;
const rnd = () => (seed = (seed * 16807) % 2147483647) / 2147483647;
const env = [];
for (let x = 697, k = 0; x < 1386; x++) {
  while (k + 1 < phrases.length && phrases[k + 1][0] <= x) k++;
  const end = k + 1 < phrases.length ? phrases[k + 1][0] : 1386;
  const f = 1 - (x - phrases[k][0]) / (end - phrases[k][0]);
  const a = .8 + phrases[k][1] * Math.pow(f, .75);
  env.push([a * (.5 + .6 * rnd()), a * (.5 + .6 * rnd())]);
}
spikes.forEach(([x, u, d]) => { env[x - 697] = [u, d]; if (env[x - 696]) env[x - 696] = [u * .55, d * .5]; });
const wave = cy => `<path fill="#46d6a5" d="${env.map(([u, d], i) => `M${697 + i} ${(cy - u).toFixed(1)}h1.100V${(cy + d).toFixed(1)}h-1.100z`).join("")}"/>`;

let l = `<path d="M695 224h692v600H695z" fill="#1d1d1d"/>`;
l += [393.500, 564.500, 736.500].map(y => `<path d="M695 ${y}h691" stroke="#313131" stroke-width="3"/>`).join("");
l += `<path d="M695 823.500h692" stroke="#313131"/>`;
l += `<path d="M697 226h689v165H697z" fill="#135941"/><path d="M697 241.500h689" stroke="#1b382d"/>`;
l += `<path d="M697 296.500h687" stroke="#86ad7c" stroke-width="2"/>`;
l += wave(278.500) + wave(353.500);
l += `<path d="M697 317h687" stroke="#b4e2ea" stroke-width="3"/>`;
l += [728.500, 863.500, 961.500, 1135.500, 1175.500, 1317.500, 1382.500].map(x => `<path d="M${x} 243v144" stroke="#bcd8cc" stroke-width="1.400" stroke-dasharray="2 2"/>`).join("");
l += `<path d="M697 225.500h689" stroke="#b9cdc4" stroke-width="2"/><path d="M697 390.500h689" stroke="#e6efea" stroke-width="2"/><path d="M697.500 226v165" stroke="#dfe9e4"/>`;
l += `<text x="699" y="238" font-size="11.500" font-weight="600" fill="#fff">Podcast giusto</text>`;
l += `<path d="M710.500 245.500h14v14h-14z" fill="#aaa" stroke="#7c8c85"/><path d="M711 259.500h13.500V246z" fill="#444"/>`;
l += `<path d="M709.500 379v-2.500M712 379v-3.500M714.500 379v-5M717 379v-6.500M719.500 379v-8" stroke="#a5c8ba" stroke-width="1.500"/>`;
l += `<path d="M698 383l7 7M698 387l3 3" stroke="#7fb8a2"/>`;
l += `<path d="M695.500 224v599" stroke="#761e20" stroke-width="2"/>`;
document.getElementById("lanes").innerHTML = l;

// Level meter scale, one tick per decibel
let m = `<path d="M415.500 916.500h1142v60h-1142z" fill="#1c1c1c" stroke="#000" stroke-width="1.500"/><path d="M417 917v28.500M417 947v29" stroke="#c5ba24" stroke-width="2"/><path d="M1545.500 917v59M1545.500 946h12" stroke="#000" stroke-width="1.500"/>`;
for (let i = 0; i <= 60; i++) {
  const x = Math.round(417 + i * 18.780) + .5, big = i % 3 === 0;
  m += `<path d="M${x} 977v${big ? 6 : 3}" stroke="#8a8a8a"/>`;
  if (big) m += `<text x="${i ? x : x + 4}" y="996" font-size="11.500" fill="#8f8f8f" text-anchor="middle">${i ? i - 60 : "dB"}</text>`;
}
document.getElementById("levels").innerHTML = m;
```
